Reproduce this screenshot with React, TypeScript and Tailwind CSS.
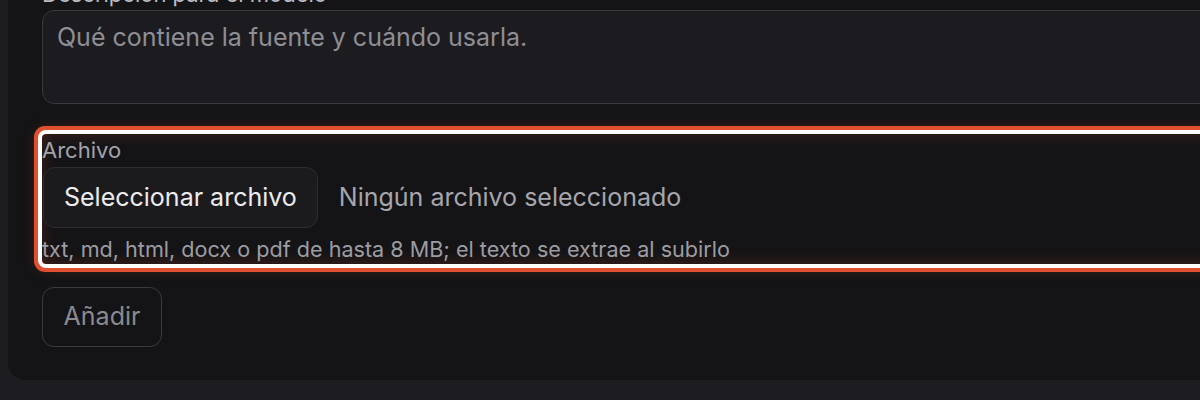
export default function App() {
  return (
    <div className="h-[400px] w-[1200px] overflow-hidden bg-[#1d1d21] pl-2 font-['Inter',sans-serif]">
      <div className="-mt-[40px] w-[1300px] rounded-b-[18px] bg-[#141416] pb-[33px] pl-[34px] pr-[40px] pt-[20px]">
        <label className="block text-[22px] leading-[28px] text-[#bcbcc4]">Descripción para el modelo</label>
        <div className="mt-[2px] h-[94px] rounded-[12px] border border-[#38383d] bg-[#1c1c20] px-[14px] pt-[10px] text-[25px] leading-[32px] text-[#8e8e95]">
          Qué contiene la fuente y cuándo usarla.
        </div>

        <div className="mt-[30px] h-[130px] rounded-[4px] shadow-[inset_0_0_16px_rgba(224,80,47,0.24),0_0_0_4px_#ffffff,0_0_0_8px_#e0502f,0_0_14px_4px_rgba(224,80,47,0.35)]">
          <div className="pt-[2px] text-[22px] leading-[28px] text-[#a3a3ab]">Archivo</div>
          <div className="mt-[3px] flex items-center gap-[21px]">
            <button className="ml-px h-[61px] rounded-[12px] border border-[#2d2d31] bg-[#1b1b1e] px-[20px] text-[25px] text-[#ececef]">
              Seleccionar archivo
            </button>
            <span className="text-[25px] text-[#a6a6ad]">Ningún archivo seleccionado</span>
          </div>
          <p className="mt-[7px] text-[21.6px] leading-[28px] text-[#9c9ca3]">
            txt, md, html, docx o pdf de hasta 8 MB; el texto se extrae al subirlo
          </p>
        </div>

        <button className="mt-[23px] h-[60px] w-[120px] rounded-[12px] border border-[#3a3a3f] text-[25px] text-[#8a8a91]">
          Añadir
        </button>
      </div>
    </div>
  );
}
